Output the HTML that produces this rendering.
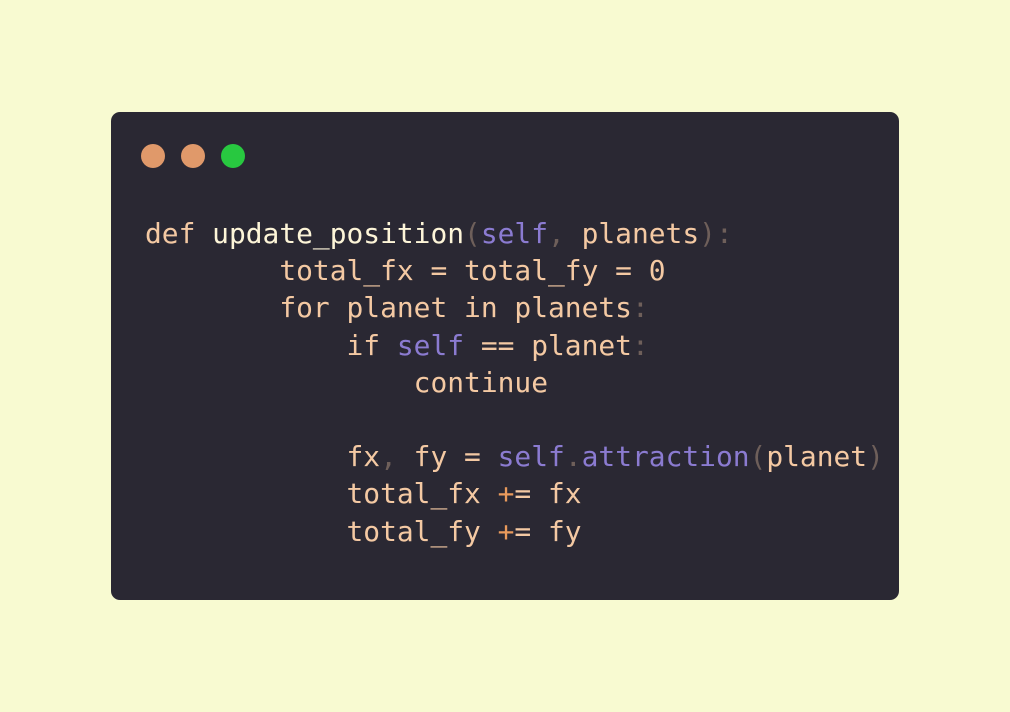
<!DOCTYPE html>
<html><head><style>
html,body{margin:0;padding:0;}
body{width:1010px;height:712px;background:#f8fad1;position:relative;overflow:hidden;}
.card{position:absolute;left:111px;top:112px;width:788px;height:488px;background:#2a2833;border-radius:9px;}
.dot{position:absolute;top:144px;width:24px;height:24px;border-radius:50%;}
pre{position:absolute;left:145px;top:215px;margin:0;font-family:"DejaVu Sans Mono","Liberation Mono",monospace;font-size:27.9px;line-height:37.2px;color:#f4c9a3;}
.f{color:#fdf5d8}.p{color:#6e5f5a}.s{color:#8b7bd1}.o{color:#e99a5c}
</style></head><body>
<div class="card"></div>
<div class="dot" style="left:141px;background:#e0996a"></div>
<div class="dot" style="left:181px;background:#e0996a"></div>
<div class="dot" style="left:221px;background:#28c840"></div>
<pre>def <span class="f">update_position</span><span class="p">(</span><span class="s">self</span><span class="p">,</span> planets<span class="p">):</span>
        total_fx = total_fy = 0
        for planet in planets<span class="p">:</span>
            if <span class="s">self</span> == planet<span class="p">:</span>
                continue

            fx<span class="p">,</span> fy = <span class="s">self</span><span class="p">.</span><span class="s">attraction</span><span class="p">(</span>planet<span class="p">)</span>
            total_fx <span class="o">+</span>= fx
            total_fy <span class="o">+</span>= fy</pre>
</body></html>
